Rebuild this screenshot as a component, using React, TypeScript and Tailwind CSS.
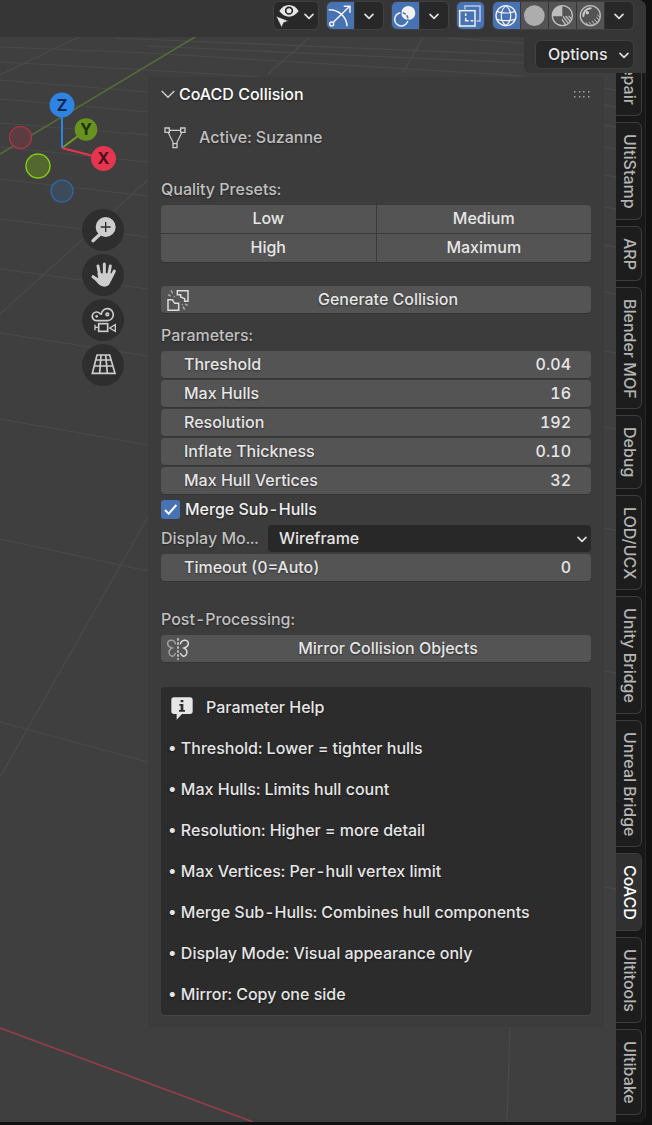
import React, { useState } from "react";

const shadow = "[text-shadow:0_1px_2px_rgba(0,0,0,0.45)]";

const gridLines: number[][] = [
  [0, 47, 148, 53], [0, 62, 148, 70], [0, 80, 148, 92], [0, 99, 148, 112], [0, 123, 148, 135],
  [0, 147, 148, 162], [0, 179, 148, 196], [0, 219, 148, 237], [0, 269, 148, 289], [0, 333, 148, 356],
  [0, 419, 148, 445], [0, 539, 148, 571], [0, 722, 148, 762],
  [0, 314, 148, 180], [0, 777, 148, 517], [79, 37, 0, 75],
  [114, 38, 523, 55], [148, 46, 523, 63], [148, 53, 523, 76], [447, 38, 523, 43], [148, 70, 260, 77],
  [310, 37, 267, 75], [423, 37, 403, 73], [510, 1027, 507, 1122],
];
const edgeLines = [88, 105, 125, 147, 175, 207, 245, 292, 351, 427, 528, 671, 887];

function ViewportGrid() {
  return (
    <svg aria-hidden="true" className="absolute inset-0 h-full w-full" viewBox="0 0 646 1122" preserveAspectRatio="xMinYMin slice" fill="none">
      <g stroke="#4a4a4a" strokeWidth="1.2">
        {gridLines.map((l, i) => (
          <line key={i} x1={l[0]} y1={l[1]} x2={l[2]} y2={l[3]} />
        ))}
        {edgeLines.map((y) => (
          <line key={y} x1="604" y1={y} x2="616" y2={y + 2} />
        ))}
      </g>
      <path d="M0 154 195 37" stroke="#53693a" strokeWidth="1.8" />
      <path d="M0 1028 253 1122" stroke="#9c3d4b" strokeWidth="1.5" />
    </svg>
  );
}

function Chevron() {
  return (
    <svg aria-hidden="true" className="h-3 w-3" viewBox="0 0 36 36" fill="none" stroke="#e0e0e0" strokeWidth="5">
      <path d="M6 13 18 25 30 13" strokeLinecap="round" strokeLinejoin="round" />
    </svg>
  );
}

function Glyph({ children }: { children: React.ReactNode }) {
  return (
    <svg aria-hidden="true" className="h-[27px] w-[27px] shrink-0" viewBox="0 0 81 81" fill="none" stroke="#f2f2f2" strokeWidth="4.500">
      {children}
    </svg>
  );
}

function HeaderButton({ label, tone = "dark", wide = "w-[27px]", children }: { label: string; tone?: "dark" | "blue" | "grey"; wide?: string; children: React.ReactNode }) {
  const bg = tone === "blue" ? "bg-[#4772b3]" : tone === "grey" ? "bg-[#545454]" : "bg-[#282828]";
  return (
    <button type="button" aria-label={label} className={`flex h-[27px] shrink-0 items-center justify-center ${wide} ${bg}`}>
      {children}
    </button>
  );
}

const group = "flex h-[27px] gap-px overflow-hidden rounded-[5px] ring-1 ring-[#404040]";

function Header() {
  return (
    <header className="relative flex h-[37px] justify-end gap-[9px] bg-[#363636] pt-[2px] pr-[13px]">
      <div className={group}>
        <button type="button" aria-label="Object visibility" className="flex h-[27px] w-11 items-center bg-[#282828] pr-1">
          <Glyph>
            <path d="M16 27Q27 9 45 9T74 27Q62 44 45 44T16 27Z" fill="#e6e6e6" stroke="none" />
            <circle cx="45" cy="26" r="10" stroke="#282828" strokeWidth="5" fill="#e6e6e6" />
            <path d="M6 42 44 57 29 62 23 77Z" fill="#e6e6e6" stroke="#282828" strokeWidth="2" />
          </Glyph>
          <span className="ml-[2px]"><Chevron /></span>
        </button>
      </div>
      <div className={group}>
        <HeaderButton label="Gizmos" tone="blue">
          <Glyph>
            <circle cx="14" cy="66" r="6" />
            <path d="M19 61 68 13M50 13H69V32M5 23C34 22 59 43 60 73" />
          </Glyph>
        </HeaderButton>
        <HeaderButton label="Gizmo options" wide="w-7"><Chevron /></HeaderButton>
      </div>
      <div className={group}>
        <HeaderButton label="Overlays" tone="blue">
          <Glyph>
            <defs>
              <clipPath id="lens"><circle cx="49" cy="33" r="22" /></clipPath>
            </defs>
            <circle cx="28" cy="52" r="20" />
            <circle cx="49" cy="33" r="24" fill="#4772b3" stroke="none" />
            <circle cx="49" cy="33" r="21" fill="#f2f2f2" stroke="none" />
            <circle cx="28" cy="52" r="20" stroke="#4772b3" strokeDasharray="10 4" clipPath="url(#lens)" />
          </Glyph>
        </HeaderButton>
        <HeaderButton label="Overlay options" wide="w-7"><Chevron /></HeaderButton>
      </div>
      <div className={group}>
        <HeaderButton label="Toggle X-ray" tone="blue">
          <Glyph>
            <path d="M24 22V12H69V57H59" stroke="#b9c8e2" />
            <rect x="8" y="26" width="46" height="46" />
            <path d="M26 34v8M26 47v9h9M41 56h8" />
          </Glyph>
        </HeaderButton>
      </div>
      <div className={group}>
        <HeaderButton label="Wireframe shading" tone="blue">
          <Glyph>
            <circle cx="39" cy="41" r="30" strokeWidth="4" />
            <path d="M39 11C20 26 20 56 39 71C58 56 58 26 39 11ZM12 29Q39 37 66 29M11 52Q39 60 67 52" strokeWidth="3.500" />
          </Glyph>
        </HeaderButton>
        <HeaderButton label="Solid shading" tone="grey">
          <Glyph><circle cx="40" cy="41" r="31" fill="#adadad" stroke="none" /></Glyph>
        </HeaderButton>
        <HeaderButton label="Material preview" tone="grey">
          <Glyph>
            <circle cx="40" cy="41" r="30" stroke="#bdbdbd" strokeWidth="4" />
            <path d="M40 43H10A30 30 0 0 1 40 11Z" fill="#bdbdbd" stroke="none" />
            <path d="M42 43 58 64M50 42 64 59M59 42 69 53M39 52 51 70" stroke="#bdbdbd" strokeWidth="4" />
          </Glyph>
        </HeaderButton>
        <HeaderButton label="Rendered shading" tone="grey">
          <Glyph>
            <circle cx="40" cy="41" r="30" stroke="#bdbdbd" strokeWidth="4" />
            <path d="M19 42A22 22 0 0 1 41 19" stroke="#cccccc" strokeWidth="6" strokeLinecap="round" />
            <circle cx="31" cy="32" r="5" fill="#cccccc" stroke="none" />
            <path d="M61 39l8 6M58 46l9 8M52 52l9 10M45 57l9 11M36 60l8 10M27 61l5 8" stroke="#bdbdbd" strokeWidth="3" />
          </Glyph>
        </HeaderButton>
        <HeaderButton label="Shading options" wide="w-7"><Chevron /></HeaderButton>
      </div>
    </header>
  );
}

function AxisGizmo() {
  return (
    <svg role="img" aria-label="Axis orientation" className="mt-[7px] h-[129px] w-[148px]" viewBox="0 80 148 129" fontFamily="Inter, sans-serif" fontSize="16" fontWeight="700" textAnchor="middle">
      <g strokeWidth="1.2">
        <circle cx="20.500" cy="137.500" r="11" fill="#5d3c41" stroke="#a93548" />
        <circle cx="62" cy="191" r="11" fill="#3c4a5b" stroke="#3269a8" />
      </g>
      <g fill="none" strokeWidth="2">
        <path d="M62 148 86 130" stroke="#6f9c22" />
        <path d="M62 148V105" stroke="#2f83e3" />
        <path d="M62 148 103 158.500" stroke="#e6354f" />
      </g>
      <circle cx="38" cy="166" r="12" fill="#53682f" stroke="#86cc14" strokeWidth="1.4" />
      <circle cx="86" cy="129.500" r="11.300" fill="#67921f" />
      <circle cx="62" cy="105" r="12.500" fill="#2f83e3" />
      <circle cx="103.500" cy="158.500" r="12.500" fill="#e6354f" />
      <text x="86" y="135" fill="#20300a">Y</text>
      <text x="62" y="111" fill="#0d2a4c">Z</text>
      <text x="103.500" y="164" fill="#4b0f18">X</text>
    </svg>
  );
}

function NavButton({ label, children }: { label: string; children: React.ReactNode }) {
  return (
    <button type="button" aria-label={label} className="h-[42px] w-[42px] rounded-full bg-[#2e2e2e]">
      <svg aria-hidden="true" className="h-full w-full" viewBox="0 0 126 126" fill="none" stroke="#cdcdcd" strokeWidth="5">
        {children}
      </svg>
    </button>
  );
}

function NavButtons() {
  return (
    <div className="ml-[82px] flex flex-col gap-[3px]">
      <NavButton label="Zoom">
        <circle cx="71" cy="54" r="30" fill="#cdcdcd" stroke="none" />
        <path d="M33 95 54 76" strokeWidth="10" strokeLinecap="round" />
        <path d="M71 39V69M56 54H86" stroke="#2e2e2e" strokeWidth="4" />
      </NavButton>
      <NavButton label="Pan">
        <path d="M46 58H90L88 76Q84 98 68 98Q54 98 44 84L33 71Q37 66 49 73Z" fill="#cdcdcd" stroke="none" />
        <path d="M54 68 48 36M67 66V30M79 68 85 36M85 76 97 51M50 80 33 68" strokeWidth="9" strokeLinecap="round" />
      </NavButton>
      <NavButton label="Camera view">
        <path d="M44 65A13 13 0 1 1 54 44L58 45A18 18 0 1 1 77 65Z" />
        <circle cx="44" cy="52" r="4" fill="#cdcdcd" stroke="none" />
        <circle cx="76" cy="46" r="4" />
        <rect x="50" y="74" width="27" height="23" />
        <path d="M39 77V94M39 85H50M83 87 100 77V97Z" strokeWidth="4" />
      </NavButton>
      <NavButton label="Toggle perspective">
        <path d="M45 33H83L99 88H31ZM41 48H87M36 66H92M57 33 53 88M71 33 76 88" />
      </NavButton>
    </div>
  );
}

function PanelIcon({ children, tint = "#dcdcdc" }: { children: React.ReactNode; tint?: string }) {
  return (
    <svg aria-hidden="true" className="h-6 w-6 shrink-0" viewBox="0 0 72 72" fill="none" stroke={tint} strokeWidth="4.500">
      {children}
    </svg>
  );
}

function PanelButton({ children, icon }: { children: string; icon: React.ReactNode }) {
  return (
    <button type="button" className="flex h-[27px] w-full items-center rounded-[4px] bg-[#545454] px-[5px] shadow-[0_1px_0_#343434]">
      {icon}
      <span className={`grow pb-[2px] text-center ${shadow}`}>{children}</span>
    </button>
  );
}

function NumberField({ label, value }: { label: string; value: string }) {
  return (
    <label className={`flex h-[27px] items-center rounded-[4px] bg-[#545454] pr-5 pb-[2px] pl-[23px] shadow-[0_1px_0_#343434] ${shadow}`}>
      <span className="whitespace-nowrap">{label}</span>
      <input type="text" inputMode="decimal" defaultValue={value} className="w-0 min-w-0 grow bg-transparent text-right outline-none" />
    </label>
  );
}

function Caption({ children }: { children: string }) {
  return <p className={`h-[27px] leading-[29px] text-[#c0c0c0] ${shadow}`}>{children}</p>;
}

const helpLines = [
  "Threshold: Lower = tighter hulls",
  "Max Hulls: Limits hull count",
  "Resolution: Higher = more detail",
  "Max Vertices: Per-hull vertex limit",
  "Merge Sub-Hulls: Combines hull components",
  "Display Mode: Visual appearance only",
  "Mirror: Copy one side",
];

function CollisionPanel() {
  const [merge, setMerge] = useState(true);
  return (
    <section className="mt-1 rounded-[6px] bg-[#3c3c3c] px-[13px] pb-3">
      <div className="flex h-[34px] items-center justify-between">
        <button type="button" className={`flex items-center gap-1 text-white ${shadow}`}>
          <svg aria-hidden="true" className="h-[14px] w-[14px]" viewBox="0 0 42 42" fill="none" stroke="#d0d0d0" strokeWidth="4">
            <path d="M2 12 21 31 40 12" />
          </svg>
          CoACD Collision
        </button>
        <svg aria-hidden="true" className="h-2 w-[18px]" viewBox="0 0 18 8" fill="#a0a0a0">
          {[1, 6, 10, 15].map((x) => (
            <g key={x}>
              <rect x={x} y="1" width="1.500" height="1.500" />
              <rect x={x} y="6" width="1.500" height="1.500" />
            </g>
          ))}
        </svg>
      </div>

      <div className={`mt-[13px] flex h-[27px] items-center gap-3 pl-[2px] text-[#c0c0c0] ${shadow}`}>
        <PanelIcon tint="#cccccc">
          <path d="M19 13H53M16 20 32 53M56 20 40 53" strokeWidth="3.500" />
          <path d="M6 6H19V19H6ZM53 6H66V19H53ZM30 53H42V65H30Z" strokeWidth="4" />
        </PanelIcon>
        <span className="pb-[2px]">Active: Suzanne</span>
      </div>

      <div className="mt-6 flex flex-col gap-[3px]">
        <Caption>Quality Presets:</Caption>
        <div className={`grid grid-cols-2 gap-px overflow-hidden rounded-[4px] bg-[#3a3a3a] shadow-[0_1px_0_#343434] ${shadow}`}>
          {["Low", "Medium", "High", "Maximum"].map((name) => (
            <button key={name} type="button" className="h-7 bg-[#545454] pb-[2px]">{name}</button>
          ))}
        </div>
      </div>

      <div className="mt-6 flex flex-col gap-2">
        <PanelButton
          icon={
            <PanelIcon>
              <path d="M34 8H66V40H56V32L44 27V20H34ZM6 35H19L26 46H38V67H6Z" />
              <path d="M6 20l8 4M15 7l5 9M24 25l2 2M48 49l2 2M57 48l8 4M51 56l5 9" stroke="#a8a8a8" />
            </PanelIcon>
          }
        >
          Generate Collision
        </PanelButton>
        <Caption>Parameters:</Caption>
      </div>

      <div className="mt-[3px] flex flex-col gap-[2px]">
        <NumberField label="Threshold" value="0.04" />
        <NumberField label="Max Hulls" value="16" />
        <NumberField label="Resolution" value="192" />
        <NumberField label="Inflate Thickness" value="0.10" />
        <NumberField label="Max Hull Vertices" value="32" />
        <label className={`flex h-[27px] items-center gap-[5px] text-[#f0f0f0] ${shadow}`}>
          <span className="grid h-[19px] w-[19px]">
            <input type="checkbox" checked={merge} onChange={() => setMerge(!merge)} className="col-start-1 row-start-1 appearance-none rounded-[3px] bg-[#545454] checked:bg-[#4772b3]" />
            {merge && (
              <svg aria-hidden="true" className="pointer-events-none col-start-1 row-start-1 h-[19px] w-[19px]" viewBox="0 0 57 57" fill="none" stroke="#ffffff" strokeWidth="6">
                <path d="M12 30 23 41 46 15" />
              </svg>
            )}
          </span>
          <span className="pb-[2px]">Merge Sub-Hulls</span>
        </label>
        <div className="flex h-[27px] items-center">
          <label htmlFor="display-mode" className={`w-[107px] shrink-0 pb-[2px] whitespace-nowrap text-[#c0c0c0] ${shadow}`}>Display Mo...</label>
          <div className="grid h-full grow items-center">
            <select id="display-mode" defaultValue="Wireframe" className="col-start-1 row-start-1 h-[27px] w-full appearance-none rounded-[4px] bg-[#282828] pb-[2px] pl-[11px] text-[#e6e6e6]">
              <option>Wireframe</option>
              <option>Solid</option>
            </select>
            <span className="pointer-events-none col-start-1 row-start-1 mr-[3px] justify-self-end"><Chevron /></span>
          </div>
        </div>
        <NumberField label="Timeout (0=Auto)" value="0" />
      </div>

      <div className="mt-6 flex flex-col gap-[3px]">
        <Caption>Post-Processing:</Caption>
        <PanelButton
          icon={
            <PanelIcon>
              <path d="M36 4V68" strokeDasharray="7 5" />
              <path d="M29 22C27 7 6 6 5 18C4 28 11 31 18 33C8 37 7 48 12 54C18 61 26 57 29 48" stroke="#a0a0a0" />
              <path d="M43 22C45 7 66 6 67 18C68 28 61 31 54 33C64 37 65 48 60 54C54 61 46 57 43 48" />
            </PanelIcon>
          }
        >
          Mirror Collision Objects
        </PanelButton>
      </div>

      <div className={`mt-[25px] rounded-[4px] bg-[#2c2c2c] shadow-[0_1px_0_#474747] ${shadow}`}>
        <h2 className="flex h-[41px] items-center gap-3 pl-[9px]">
          <PanelIcon>
            <path d="M12 4H60Q68 4 68 12V46Q68 54 60 54H36L20 71V54H12Q4 54 4 46V12Q4 4 12 4Z" fill="#e6e6e6" stroke="none" />
            <path d="M32 12H40V19H32ZM28 24H40V42H45V47H27V42H32V29H28Z" fill="#2c2c2c" stroke="none" />
          </PanelIcon>
          <span className="pb-[2px]">Parameter Help</span>
        </h2>
        <ul>
          {helpLines.map((line) => (
            <li key={line} className="h-[41px] truncate pl-[7px] leading-[41px]">• {line}</li>
          ))}
        </ul>
      </div>
    </section>
  );
}

const tabs = ["UltiStamp", "ARP", "Blender MOF", "Debug", "LOD/UCX", "Unity Bridge", "Unreal Bridge", "CoACD", "Ultitools", "Ultibake"];
const tabBase = "flex w-[26px] items-center rounded-r-[6px] border border-l-0 border-[#3d3d3d] pt-[11px] pb-[10px] pl-[2px] [writing-mode:vertical-rl] whitespace-nowrap";

function SideTabs() {
  const [active, setActive] = useState("CoACD");
  return (
    <nav className="flex w-[30px] shrink-0 flex-col gap-[6px] border-r border-[#262626] bg-[#181818] pb-[6px]">
      <div className="flex h-[43px] flex-col justify-end overflow-hidden">
        <button type="button" className={`${tabBase} shrink-0 bg-[#1d1d1d] text-[#b4b4b4]`}>Repair</button>
      </div>
      {tabs.map((tab) => (
        <button
          key={tab}
          type="button"
          onClick={() => setActive(tab)}
          className={`${tabBase} ${active === tab ? "bg-[#303030] text-white" : "bg-[#1d1d1d] text-[#b4b4b4]"}`}
        >
          {tab}
        </button>
      ))}
    </nav>
  );
}

export default function App() {
  return (
    <div className="flex min-h-screen flex-col bg-[#111111] pr-[6px] pb-[3px] font-[Inter,sans-serif] text-base leading-5 font-[450] text-[#e6e6e6] tabular-nums">
      <div className="relative isolate flex grow flex-col overflow-hidden rounded-tr-[8px] rounded-br-[8px] bg-[#3f3f3f]">
        <div className="absolute inset-0 -z-10"><ViewportGrid /></div>
        <Header />
        <div className="flex justify-end">
          <div className="flex h-9 items-start rounded-bl-[6px] bg-[#363636] pt-1 pr-[13px] pl-3">
            <button type="button" className={`flex h-[27px] w-[97px] items-center justify-between rounded-[5px] bg-[#282828] pr-[3px] pl-3 ring-1 ring-[#404040] ${shadow}`}>
              <span className="pb-[2px]">Options</span>
              <Chevron />
            </button>
          </div>
        </div>
        <main className="flex grow">
          <div className="w-[148px] shrink-0">
            <AxisGizmo />
            <NavButtons />
          </div>
          <div className="min-w-0 grow">
            <CollisionPanel />
          </div>
          <div className="w-3 shrink-0" />
          <SideTabs />
        </main>
      </div>
    </div>
  );
}
